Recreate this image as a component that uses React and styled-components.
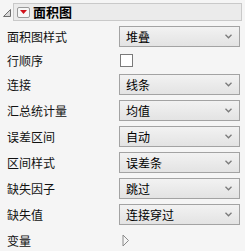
import React from 'react';
import styled, { createGlobalStyle } from 'styled-components';

const GlobalStyle = createGlobalStyle`
  html, body {
    margin: 0;
    padding: 0;
    background: #f5f5f5;
  }
  body {
    font-family: "Noto Sans CJK SC", "Liberation Sans", sans-serif;
    font-size: 12px;
    color: #111;
  }
`;

const Panel = styled.div`
  width: 245px;
  height: 251px;
  padding: 3px 0 0 0;
  box-sizing: border-box;
  background: #f5f5f5;
`;

const Header = styled.div`
  display: flex;
  align-items: center;
  height: 18px;
`;

const Disclosure = styled.svg`
  width: 8px;
  height: 8px;
  margin: 2px 2px 0 3px;
`;

const TitleBar = styled.div`
  flex: 1;
  margin-right: 3px;
  height: 18px;
  display: flex;
  align-items: center;
  background: #ebebeb;
  border: 1px solid #c9c9c9;
  box-sizing: border-box;
  padding-left: 3px;
`;

const MenuButton = styled.div`
  width: 13px;
  height: 11px;
  border: 1px solid #9a9a9a;
  border-radius: 2px;
  background: #f7f7f7;
  box-sizing: border-box;
  display: flex;
  align-items: center;
  justify-content: center;
  margin-right: 3px;
`;

const Title = styled.span`
  font-weight: bold;
  font-size: 13px;
  color: #000;
  line-height: 16px;
`;

const Form = styled.div`
  display: grid;
  grid-template-columns: 112px 121px;
  padding-left: 7px;
  margin-top: 5px;
  row-gap: 5px;
`;

const Label = styled.div`
  display: flex;
  align-items: center;
  height: ${p => p.$h || 21}px;
  font-size: 12px;
  color: #111;
  white-space: nowrap;
`;

const Cell = styled.div`
  display: flex;
  align-items: center;
  height: ${p => p.$h || 21}px;
`;

const Select = styled.div`
  width: 121px;
  height: 21px;
  box-sizing: border-box;
  border: 1px solid #a3a3a3;
  background: linear-gradient(#f2f2f2, #e3e3e3);
  display: flex;
  align-items: center;
  justify-content: space-between;
  padding: 0 7px 0 6px;
  font-size: 12px;
  color: #000;
`;

const Check = styled.div`
  width: 13px;
  height: 13px;
  margin-left: 1px;
  box-sizing: border-box;
  border: 1px solid #7a7a7a;
  background: #fff;
`;

const Chevron = () => (
  <svg width="7" height="5" viewBox="0 0 7 5">
    <path d="M0.5 0.8 L3.5 3.8 L6.5 0.8" fill="none" stroke="#7a7a7a" strokeWidth="1.3" />
  </svg>
);

const rows = [
  ['面积图样式', '堆叠'],
  ['行顺序', null],
  ['连接', '线条'],
  ['汇总统计量', '均值'],
  ['误差区间', '自动'],
  ['区间样式', '误差条'],
  ['缺失因子', '跳过'],
  ['缺失值', '连接穿过'],
];

export default function App() {
  return (
    <Panel>
      <GlobalStyle />
      <Header>
        <Disclosure viewBox="0 0 8 8">
          <path d="M7.5 0.5 L7.5 7.5 L0.5 7.5 Z" fill="#d8d8d8" stroke="#6e6e6e" strokeWidth="1" />
        </Disclosure>
        <TitleBar>
          <MenuButton>
            <svg width="7" height="4" viewBox="0 0 7 4">
              <path d="M0 0 L7 0 L3.5 4 Z" fill="#d0121b" />
            </svg>
          </MenuButton>
          <Title>面积图</Title>
        </TitleBar>
      </Header>
      <Form>
        {rows.map(([label, value]) =>
          value === null ? (
            <React.Fragment key={label}>
              <Label $h={17}>{label}</Label>
              <Cell $h={17}><Check /></Cell>
            </React.Fragment>
          ) : (
            <React.Fragment key={label}>
              <Label>{label}</Label>
              <Cell>
                <Select>
                  <span>{value}</span>
                  <Chevron />
                </Select>
              </Cell>
            </React.Fragment>
          )
        )}
        <Label $h={20}>变量</Label>
        <Cell $h={20}>
          <svg width="8" height="13" viewBox="0 0 8 13" style={{ marginLeft: 3 }}>
            <path d="M1 1 L6.5 6.5 L1 12 Z" fill="#f5f5f5" stroke="#8a8a8a" strokeWidth="1" />
          </svg>
        </Cell>
      </Form>
    </Panel>
  );
}
